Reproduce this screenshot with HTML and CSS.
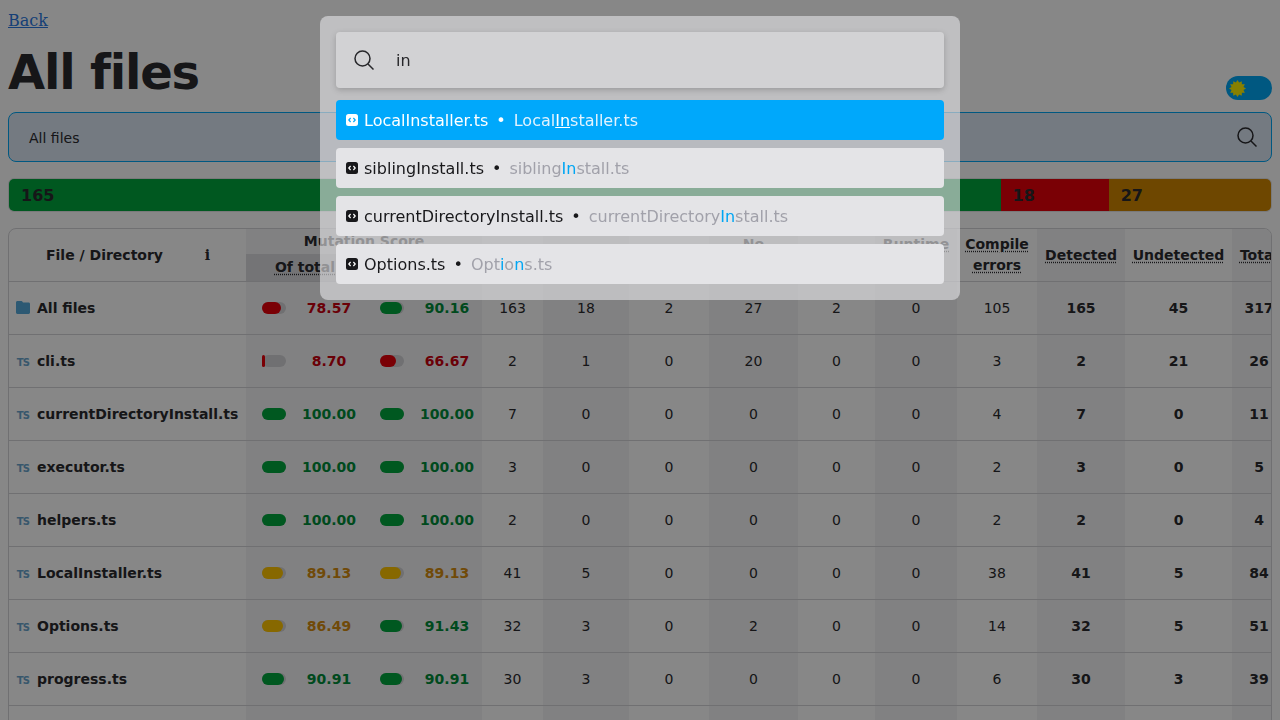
FILE: index.html
```html
<!DOCTYPE html>
<html lang="en">
<head>
<meta charset="utf-8">
<title>All files</title>
<link rel="stylesheet" href="styles.css">
</head>
<body>
<a class="back" href="#">Back</a>
<header class="title-row">
  <h1>All files</h1>
  <button class="toggle" type="button" aria-label="Theme">
    <svg class="sun" viewBox="0 0 16 16"><polygon points="16,8 13.6,9.5 14.93,12 12.1,12.1 12,14.93 9.5,13.6 8,16 6.5,13.6 4,14.93 3.9,12.1 1.07,12 2.4,9.5 0,8 2.4,6.5 1.07,4 3.9,3.9 4,1.07 6.5,2.4 8,0 9.5,2.4 12,1.07 12.1,3.9 14.93,4 13.6,6.5"/></svg>
  </button>
</header>
<div class="breadcrumb">
  <span class="crumb">All files</span>
  <svg class="search-icon" viewBox="0 0 20 20"><circle cx="8.5" cy="8.5" r="7.5"/><line x1="14" y1="14" x2="19.5" y2="19.5"/></svg>
</div>
<div class="totals">
  <div class="seg green" style="width:78.57%">165</div>
  <div class="seg red" style="width:8.57%">18</div>
  <div class="seg amber" style="width:12.86%">27</div>
</div>
<div class="table-wrap">
<table>
  <colgroup>
    <col class="c-file"><col class="c-bar"><col class="c-num"><col class="c-bar"><col class="c-num">
    <col class="c-killed"><col class="c-surv"><col class="c-time"><col class="c-nocov"><col class="c-ign">
    <col class="c-run"><col class="c-comp"><col class="c-det"><col class="c-und"><col class="c-tot">
  </colgroup>
  <thead>
    <tr class="h1">
      <th rowspan="2" class="file-head"><div class="file-head-in"><span>File / Directory</span><span class="info">i</span></div></th>
      <th colspan="4" class="shade">Mutation Score</th>
      <th rowspan="2"><u>Killed</u></th>
      <th rowspan="2" class="shade"><u>Survived</u></th>
      <th rowspan="2"><u>Timeout</u></th>
      <th rowspan="2" class="shade"><u>No coverage</u></th>
      <th rowspan="2"><u>Ignored</u></th>
      <th rowspan="2" class="shade"><u>Runtime errors</u></th>
      <th rowspan="2"><u>Compile errors</u></th>
      <th rowspan="2" class="shade"><u>Detected</u></th>
      <th rowspan="2"><u>Undetected</u></th>
      <th rowspan="2" class="shade total-head"><u>Total</u></th>
    </tr>
    <tr class="h2">
      <th colspan="2" class="shade2"><u>Of total</u></th>
      <th colspan="2" class="shade2"><u>Of covered</u></th>
    </tr>
  </thead>
  <tbody>
    <tr>
      <td class="name"><div class="name-in"><svg class="folder" viewBox="0 0 14 13"><path d="M0 1.5C0 .7.6 0 1.4 0h4c.5 0 .9.3 1.1.7L7 1.5h5.6c.8 0 1.4.6 1.4 1.4v8.7c0 .8-.6 1.4-1.4 1.4H1.4C.6 13 0 12.4 0 11.6Z"/></svg><span>All files</span></div></td>
      <td class="shade bar-cell"><div class="bar"><div class="fill f-red" style="width:78.57%"></div></div></td>
      <td class="shade num t-red">78.57</td>
      <td class="shade bar-cell"><div class="bar"><div class="fill f-green" style="width:90.16%"></div></div></td>
      <td class="shade num t-green">90.16</td>
      <td>163</td><td class="shade">18</td><td>2</td><td class="shade">27</td><td>2</td><td class="shade">0</td><td>105</td><td class="shade b">165</td><td class="b">45</td><td class="shade b tot">317</td>
    </tr>
    <tr>
      <td class="name"><div class="name-in"><span class="ts">TS</span><span>cli.ts</span></div></td>
      <td class="shade bar-cell"><div class="bar"><div class="fill f-red" style="width:8.7%"></div></div></td>
      <td class="shade num t-red">8.70</td>
      <td class="shade bar-cell"><div class="bar"><div class="fill f-red" style="width:66.67%"></div></div></td>
      <td class="shade num t-red">66.67</td>
      <td>2</td><td class="shade">1</td><td>0</td><td class="shade">20</td><td>0</td><td class="shade">0</td><td>3</td><td class="shade b">2</td><td class="b">21</td><td class="shade b tot">26</td>
    </tr>
    <tr>
      <td class="name"><div class="name-in"><span class="ts">TS</span><span>currentDirectoryInstall.ts</span></div></td>
      <td class="shade bar-cell"><div class="bar"><div class="fill f-green" style="width:100%"></div></div></td>
      <td class="shade num t-green">100.00</td>
      <td class="shade bar-cell"><div class="bar"><div class="fill f-green" style="width:100%"></div></div></td>
      <td class="shade num t-green">100.00</td>
      <td>7</td><td class="shade">0</td><td>0</td><td class="shade">0</td><td>0</td><td class="shade">0</td><td>4</td><td class="shade b">7</td><td class="b">0</td><td class="shade b tot">11</td>
    </tr>
    <tr>
      <td class="name"><div class="name-in"><span class="ts">TS</span><span>executor.ts</span></div></td>
      <td class="shade bar-cell"><div class="bar"><div class="fill f-green" style="width:100%"></div></div></td>
      <td class="shade num t-green">100.00</td>
      <td class="shade bar-cell"><div class="bar"><div class="fill f-green" style="width:100%"></div></div></td>
      <td class="shade num t-green">100.00</td>
      <td>3</td><td class="shade">0</td><td>0</td><td class="shade">0</td><td>0</td><td class="shade">0</td><td>2</td><td class="shade b">3</td><td class="b">0</td><td class="shade b tot">5</td>
    </tr>
    <tr>
      <td class="name"><div class="name-in"><span class="ts">TS</span><span>helpers.ts</span></div></td>
      <td class="shade bar-cell"><div class="bar"><div class="fill f-green" style="width:100%"></div></div></td>
      <td class="shade num t-green">100.00</td>
      <td class="shade bar-cell"><div class="bar"><div class="fill f-green" style="width:100%"></div></div></td>
      <td class="shade num t-green">100.00</td>
      <td>2</td><td class="shade">0</td><td>0</td><td class="shade">0</td><td>0</td><td class="shade">0</td><td>2</td><td class="shade b">2</td><td class="b">0</td><td class="shade b tot">4</td>
    </tr>
    <tr>
      <td class="name"><div class="name-in"><span class="ts">TS</span><span>LocalInstaller.ts</span></div></td>
      <td class="shade bar-cell"><div class="bar"><div class="fill f-amber" style="width:89.13%"></div></div></td>
      <td class="shade num t-amber">89.13</td>
      <td class="shade bar-cell"><div class="bar"><div class="fill f-amber" style="width:89.13%"></div></div></td>
      <td class="shade num t-amber">89.13</td>
      <td>41</td><td class="shade">5</td><td>0</td><td class="shade">0</td><td>0</td><td class="shade">0</td><td>38</td><td class="shade b">41</td><td class="b">5</td><td class="shade b tot">84</td>
    </tr>
    <tr>
      <td class="name"><div class="name-in"><span class="ts">TS</span><span>Options.ts</span></div></td>
      <td class="shade bar-cell"><div class="bar"><div class="fill f-amber" style="width:86.49%"></div></div></td>
      <td class="shade num t-amber">86.49</td>
      <td class="shade bar-cell"><div class="bar"><div class="fill f-green" style="width:91.43%"></div></div></td>
      <td class="shade num t-green">91.43</td>
      <td>32</td><td class="shade">3</td><td>0</td><td class="shade">2</td><td>0</td><td class="shade">0</td><td>14</td><td class="shade b">32</td><td class="b">5</td><td class="shade b tot">51</td>
    </tr>
    <tr>
      <td class="name"><div class="name-in"><span class="ts">TS</span><span>progress.ts</span></div></td>
      <td class="shade bar-cell"><div class="bar"><div class="fill f-green" style="width:90.91%"></div></div></td>
      <td class="shade num t-green">90.91</td>
      <td class="shade bar-cell"><div class="bar"><div class="fill f-green" style="width:90.91%"></div></div></td>
      <td class="shade num t-green">90.91</td>
      <td>30</td><td class="shade">3</td><td>0</td><td class="shade">0</td><td>0</td><td class="shade">0</td><td>6</td><td class="shade b">30</td><td class="b">3</td><td class="shade b tot">39</td>
    </tr>
    <tr>
      <td class="name"></td>
      <td class="shade bar-cell"></td><td class="shade num"></td><td class="shade bar-cell"></td><td class="shade num"></td>
      <td></td><td class="shade"></td><td></td><td class="shade"></td><td></td><td class="shade"></td><td></td><td class="shade b"></td><td class="b"></td><td class="shade b tot"></td>
    </tr>
  </tbody>
</table>
</div>

<div class="overlay">
  <div class="modal">
    <div class="palette-input">
      <svg class="search-icon" viewBox="0 0 20 20"><circle cx="8.5" cy="8.5" r="7.5"/><line x1="14" y1="14" x2="19.5" y2="19.5"/></svg>
      <span>in</span>
    </div>
    <ul class="results">
      <li class="result selected">
        <svg class="file-ic" viewBox="0 0 12 12"><rect width="12" height="12" rx="2.5" class="ic-bg"/><path class="ic-fg" d="M4.6 4 2.8 6l1.8 2M7.4 4l1.8 2-1.8 2"/></svg>
        <span>LocalInstaller.ts</span><span class="dot">•</span>
        <span class="path">Local<mark>In</mark>staller.ts</span>
      </li>
      <li class="result">
        <svg class="file-ic" viewBox="0 0 12 12"><rect width="12" height="12" rx="2.5" class="ic-bg"/><path class="ic-fg" d="M4.6 4 2.8 6l1.8 2M7.4 4l1.8 2-1.8 2"/></svg>
        <span>siblingInstall.ts</span><span class="dot">•</span>
        <span class="path">sibling<mark>In</mark>stall.ts</span>
      </li>
      <li class="result">
        <svg class="file-ic" viewBox="0 0 12 12"><rect width="12" height="12" rx="2.5" class="ic-bg"/><path class="ic-fg" d="M4.6 4 2.8 6l1.8 2M7.4 4l1.8 2-1.8 2"/></svg>
        <span>currentDirectoryInstall.ts</span><span class="dot">•</span>
        <span class="path">currentDirectory<mark>In</mark>stall.ts</span>
      </li>
      <li class="result">
        <svg class="file-ic" viewBox="0 0 12 12"><rect width="12" height="12" rx="2.5" class="ic-bg"/><path class="ic-fg" d="M4.6 4 2.8 6l1.8 2M7.4 4l1.8 2-1.8 2"/></svg>
        <span>Options.ts</span><span class="dot">•</span>
        <span class="path">Opt<mark>i</mark>o<mark>n</mark>s.ts</span>
      </li>
    </ul>
  </div>
</div>
</body>
</html>
```
FILE: styles.css
```css
* { box-sizing: border-box; }
html, body { height: 100%; }
body {
  margin: 0;
  padding: 8px;
  background: #fff;
  color: #2a2a2e;
  font-family: "DejaVu Sans", sans-serif;
  overflow: hidden;
}
.back {
  display: block;
  height: 24px;
  line-height: 26px;
  font-family: "DejaVu Serif", serif;
  font-size: 16px;
  color: #2a78e0;
}
.title-row {
  display: flex;
  justify-content: space-between;
  align-items: flex-end;
  margin: 12px 0;
}
h1 {
  margin: 0;
  font-size: 48px;
  line-height: 56px;
  font-weight: 700;
  letter-spacing: -.025em;
}
.toggle {
  display: flex;
  align-items: center;
  width: 46px;
  height: 24px;
  padding: 0 0 0 3px;
  border: 0;
  border-radius: 12px;
  background: #00a6f4;
}
.sun { width: 17px; height: 17px; fill: #fff200; flex: none; }
.breadcrumb {
  display: flex;
  align-items: center;
  justify-content: space-between;
  height: 50px;
  padding: 0 14px 0 20px;
  border: 1px solid #00a6f4;
  border-radius: 8px;
  background: #dbe6f3;
  font-size: 14px;
}
.crumb { padding-top: 2px; }
.search-icon {
  width: 20px;
  height: 20px;
  fill: none;
  stroke: currentColor;
  stroke-width: 1.5;
  flex: none;
}
.totals {
  display: flex;
  height: 34px;
  margin: 16px 0;
  border: 1px solid #e4e4e7;
  border-radius: 6px;
  overflow: hidden;
  background: #eee;
}
.seg {
  display: flex;
  align-items: center;
  padding-left: 12px;
  font-size: 16px;
  font-weight: 700;
}
.green { background: #00a63e; }
.red { background: #e7000b; }
.amber { background: #d08700; }
.table-wrap {
  border: 1px solid #d4d4d8;
  border-radius: 8px;
  overflow: hidden;
  width: 1264px;
}
table {
  width: 1277px;
  table-layout: fixed;
  border-collapse: collapse;
  font-size: 14px;
}
.c-file { width: 237px; }
.c-bar { width: 56px; }
.c-num { width: 62px; }
.c-killed { width: 61px; }
.c-surv { width: 86px; }
.c-time { width: 80px; }
.c-nocov { width: 89px; }
.c-ign { width: 77px; }
.c-run { width: 82px; }
.c-comp { width: 80px; }
.c-det { width: 88px; }
.c-und { width: 107px; }
.c-tot { width: 54px; }
th, td {
  padding: 0;
  text-align: center;
  vertical-align: middle;
}
th { font-weight: 700; line-height: 21px; }
th u {
  text-decoration: underline dotted;
  text-underline-offset: 2px;
}
.h1 { height: 25px; }
.h2 { height: 27px; }
.h2 th { border-bottom: 1px solid #d4d4d8; }
thead th[rowspan] { border-bottom: 1px solid #d4d4d8; padding: 1px 4px 0; }
tbody tr { height: 53px; border-bottom: 1px solid #d4d4d8; }
.shade { background: #f4f4f5; }
.shade2 { background: #dcdcdf; }
.file-head-in {
  display: flex;
  justify-content: space-between;
  padding: 0 32px 0 33px;
}
.info { font-family: "DejaVu Serif", serif; }
.name { text-align: left; font-weight: 700; }
.name-in {
  display: flex;
  align-items: center;
  gap: 7px;
  padding-left: 7px;
}
.folder { width: 14px; height: 13px; fill: #55a9d9; flex: none; }
.ts {
  width: 14px;
  flex: none;
  padding-top: 3px;
  color: #6aa5cc;
  font-size: 10px;
  font-weight: 700;
  letter-spacing: -.8px;
  text-align: center;
}
.bar-cell { padding-left: 16px; }
.bar {
  width: 24px;
  height: 12px;
  border-radius: 6px;
  background: #d4d4d8;
}
.fill { height: 100%; min-width: 3px; border-radius: 6px; }
.f-red { background: #e7000b; }
.f-green { background: #00a63e; }
.f-amber { background: #ffc400; }
.num { font-weight: 700; padding-right: 8px; }
.t-red { color: #c8000e; }
.t-green { color: #008c3a; }
.t-amber { color: #d48c10; }
.b { font-weight: 700; }

.overlay {
  position: fixed;
  inset: 0;
  background: rgba(0, 0, 0, .47);
  backdrop-filter: blur(.5px);
}
.modal {
  position: absolute;
  left: 320px;
  top: 16px;
  width: 640px;
  padding: 16px;
  border-radius: 8px;
  background: rgba(228, 228, 231, .6);
}
.palette-input {
  display: flex;
  align-items: center;
  gap: 22px;
  height: 56px;
  padding-left: 18px;
  border-radius: 4px;
  background: rgba(255, 255, 255, .3);
  box-shadow: 0 2px 6px rgba(0, 0, 0, .2);
  color: #27272a;
  font-size: 16px;
}
.results {
  display: flex;
  flex-direction: column;
  gap: 8px;
  margin: 12px 0 0;
  padding: 0;
  list-style: none;
}
.result {
  display: flex;
  align-items: center;
  height: 40px;
  padding-left: 10px;
  border-radius: 4px;
  background: #e4e4e7;
  color: #18181b;
  font-size: 16px;
  white-space: pre;
}
.file-ic { width: 12px; height: 12px; margin-right: 6px; flex: none; }
.ic-bg { fill: #18181b; }
.ic-fg { fill: none; stroke: #fff; stroke-width: 1.2; }
.dot { margin: 0 8px; }
.path { color: #a1a1aa; }
mark { background: none; color: #00a6f4; }
.selected { background: #00a8fb; color: #fff; }
.selected .ic-bg { fill: #fff; }
.selected .ic-fg { stroke: #00a8fb; }
.selected .path { color: #e0f2fe; }
.selected mark { color: #fff; text-decoration: underline; }
```
